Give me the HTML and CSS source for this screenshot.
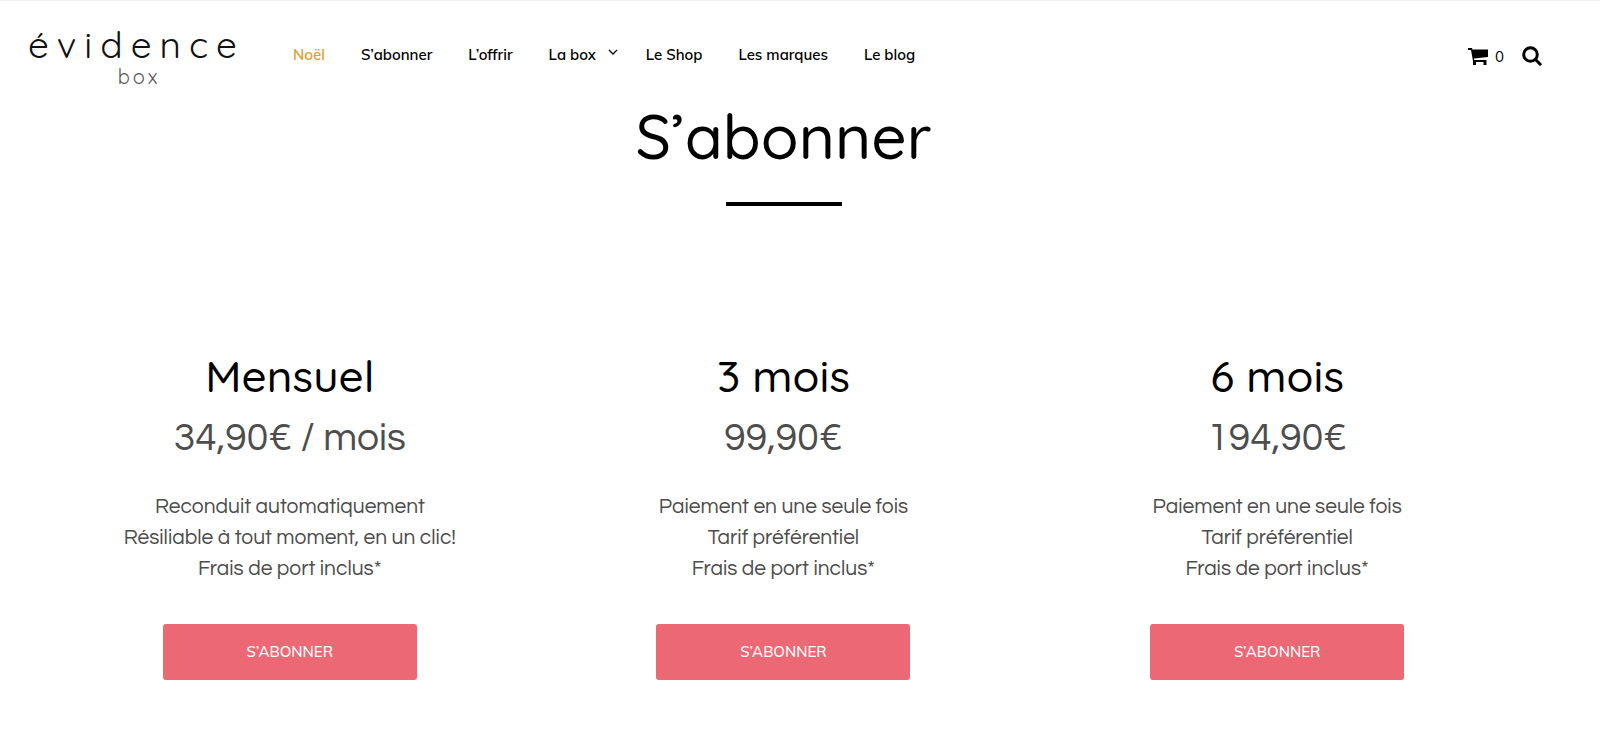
FILE: index.html
```html
<!DOCTYPE html>
<html lang="fr">
<head>
  <meta charset="UTF-8">
  <meta name="viewport" content="width=device-width, initial-scale=1.0">
  <title>S’abonner - Évidence Box</title>
  <link rel="stylesheet" href="styles.css">
</head>
<body>

  <header class="header">
    <a href="#" class="logo">
      <span class="logo-name">évidence</span>
      <span class="logo-sub">box</span>
    </a>

    <nav class="nav">
      <a href="#" class="active">Noël</a>
      <a href="#">S’abonner</a>
      <a href="#">L’offrir</a>
      <a href="#" class="has-menu">La box
        <svg class="chevron" viewBox="0 0 10 6" aria-hidden="true"><path d="M1 1l4 4 4-4"/></svg>
      </a>
      <a href="#">Le Shop</a>
      <a href="#">Les marques</a>
      <a href="#">Le blog</a>
    </nav>

    <div class="tools">
      <a href="#" class="cart" aria-label="Panier">
        <svg class="cart-icon" viewBox="0 0 20 17" aria-hidden="true">
          <path d="M0 0h4l.5 1.500H20v7.500L6 10.500l.2 1.500H18.500V17h-3v-3H8v3H5v-4L3 2H0z"/>
        </svg>
        <span>0</span>
      </a>
      <button type="button" class="search-btn" aria-label="Rechercher">
        <svg viewBox="0 0 20 20" aria-hidden="true">
          <circle cx="8.500" cy="8.500" r="6.800"/>
          <path d="M13.500 13.500l4.700 4.700"/>
        </svg>
      </button>
    </div>
  </header>

  <main class="page">
    <h1>S’abonner</h1>
    <hr class="separator">

    <section class="plans">
      <div class="plan">
        <h2>Mensuel</h2>
        <p class="price">34,90€ / mois</p>
        <p class="details">Reconduit automatiquement<br>Résiliable à tout moment, en un clic!<br>Frais de port inclus*</p>
        <a href="#" class="btn">S’ABONNER</a>
      </div>
      <div class="plan">
        <h2>3 mois</h2>
        <p class="price">99,90€</p>
        <p class="details">Paiement en une seule fois<br>Tarif préférentiel<br>Frais de port inclus*</p>
        <a href="#" class="btn">S’ABONNER</a>
      </div>
      <div class="plan">
        <h2>6 mois</h2>
        <p class="price">194,90€</p>
        <p class="details">Paiement en une seule fois<br>Tarif préférentiel<br>Frais de port inclus*</p>
        <a href="#" class="btn">S’ABONNER</a>
      </div>
    </section>
  </main>

</body>
</html>
```
FILE: styles.css
```css
* {
  box-sizing: border-box;
}

body {
  margin: 0;
  font-family: Quicksand, Lato, sans-serif;
  background: #fff;
  color: #000;
  border-top: 1px solid #f3f3f3;
}

a {
  color: inherit;
  text-decoration: none;
}

.header {
  display: flex;
  align-items: center;
  padding: 18px 58px 0 28px;
  height: 92px;
}

.logo {
  display: flex;
  flex-direction: column;
  align-items: center;
  width: 217px;
  font-weight: 400;
}

.logo-name {
  font-size: 37px;
  line-height: 42px;
  letter-spacing: 8px;
  color: #111;
}

.logo-sub {
  padding-left: 5px;
  font-size: 20px;
  line-height: 24px;
  letter-spacing: 3px;
  color: #555;
}

.nav {
  display: flex;
  gap: 36px;
  margin: 0 0 2px 48px;
  font-family: Muli, Mulish, Quicksand, sans-serif;
  font-size: 15px;
  font-weight: 600;
  line-height: 20px;
}

.nav .active {
  color: #dda032;
}

.has-menu {
  display: flex;
  gap: 12px;
  margin-right: -8px;
}

.chevron {
  width: 10px;
  height: 6px;
  margin-top: 4px;
  fill: none;
  stroke: #000;
  stroke-width: 1.3;
}

.tools {
  display: flex;
  align-items: center;
  gap: 18px;
  margin-left: auto;
}

.cart {
  display: flex;
  align-items: center;
  gap: 7px;
  font-family: Muli, Mulish, Quicksand, sans-serif;
  font-size: 15px;
}

.cart-icon {
  width: 20px;
  height: 17px;
}

.search-btn {
  padding: 0;
  border: 0;
  background: none;
  cursor: pointer;
}

.search-btn svg {
  display: block;
  width: 20px;
  height: 20px;
  fill: none;
  stroke: #000;
  stroke-width: 3;
  stroke-linecap: round;
}

.page {
  padding: 0 76px 60px 43px;
  text-align: center;
}

h1 {
  margin: 0;
  font-size: 62px;
  font-weight: 500;
  line-height: 86px;
}

.separator {
  width: 116px;
  height: 4px;
  margin: 23px auto 0;
  border: 0;
  background: #000;
}

.plans {
  display: grid;
  grid-template-columns: repeat(3, 1fr);
  margin-top: 140px;
}

.plan {
  display: flex;
  flex-direction: column;
  align-items: center;
}

h2 {
  margin: 0;
  font-size: 44px;
  font-weight: 500;
  line-height: 60px;
}

.price {
  margin: 0;
  font-family: Questrial, Inter, sans-serif;
  font-size: 39px;
  line-height: 64px;
  color: #4d4d4d;
}

.details {
  margin: 21px 0 40px;
  font-family: Questrial, Inter, sans-serif;
  font-size: 21px;
  line-height: 31px;
  color: #4d4d4d;
}

.btn {
  width: 254px;
  border-radius: 3px;
  background: #eb6874;
  color: #fff;
  font-family: Muli, Mulish, Quicksand, sans-serif;
  font-size: 15px;
  font-weight: 500;
  line-height: 56px;
}

.btn:hover {
  background: #e2525f;
}
```
